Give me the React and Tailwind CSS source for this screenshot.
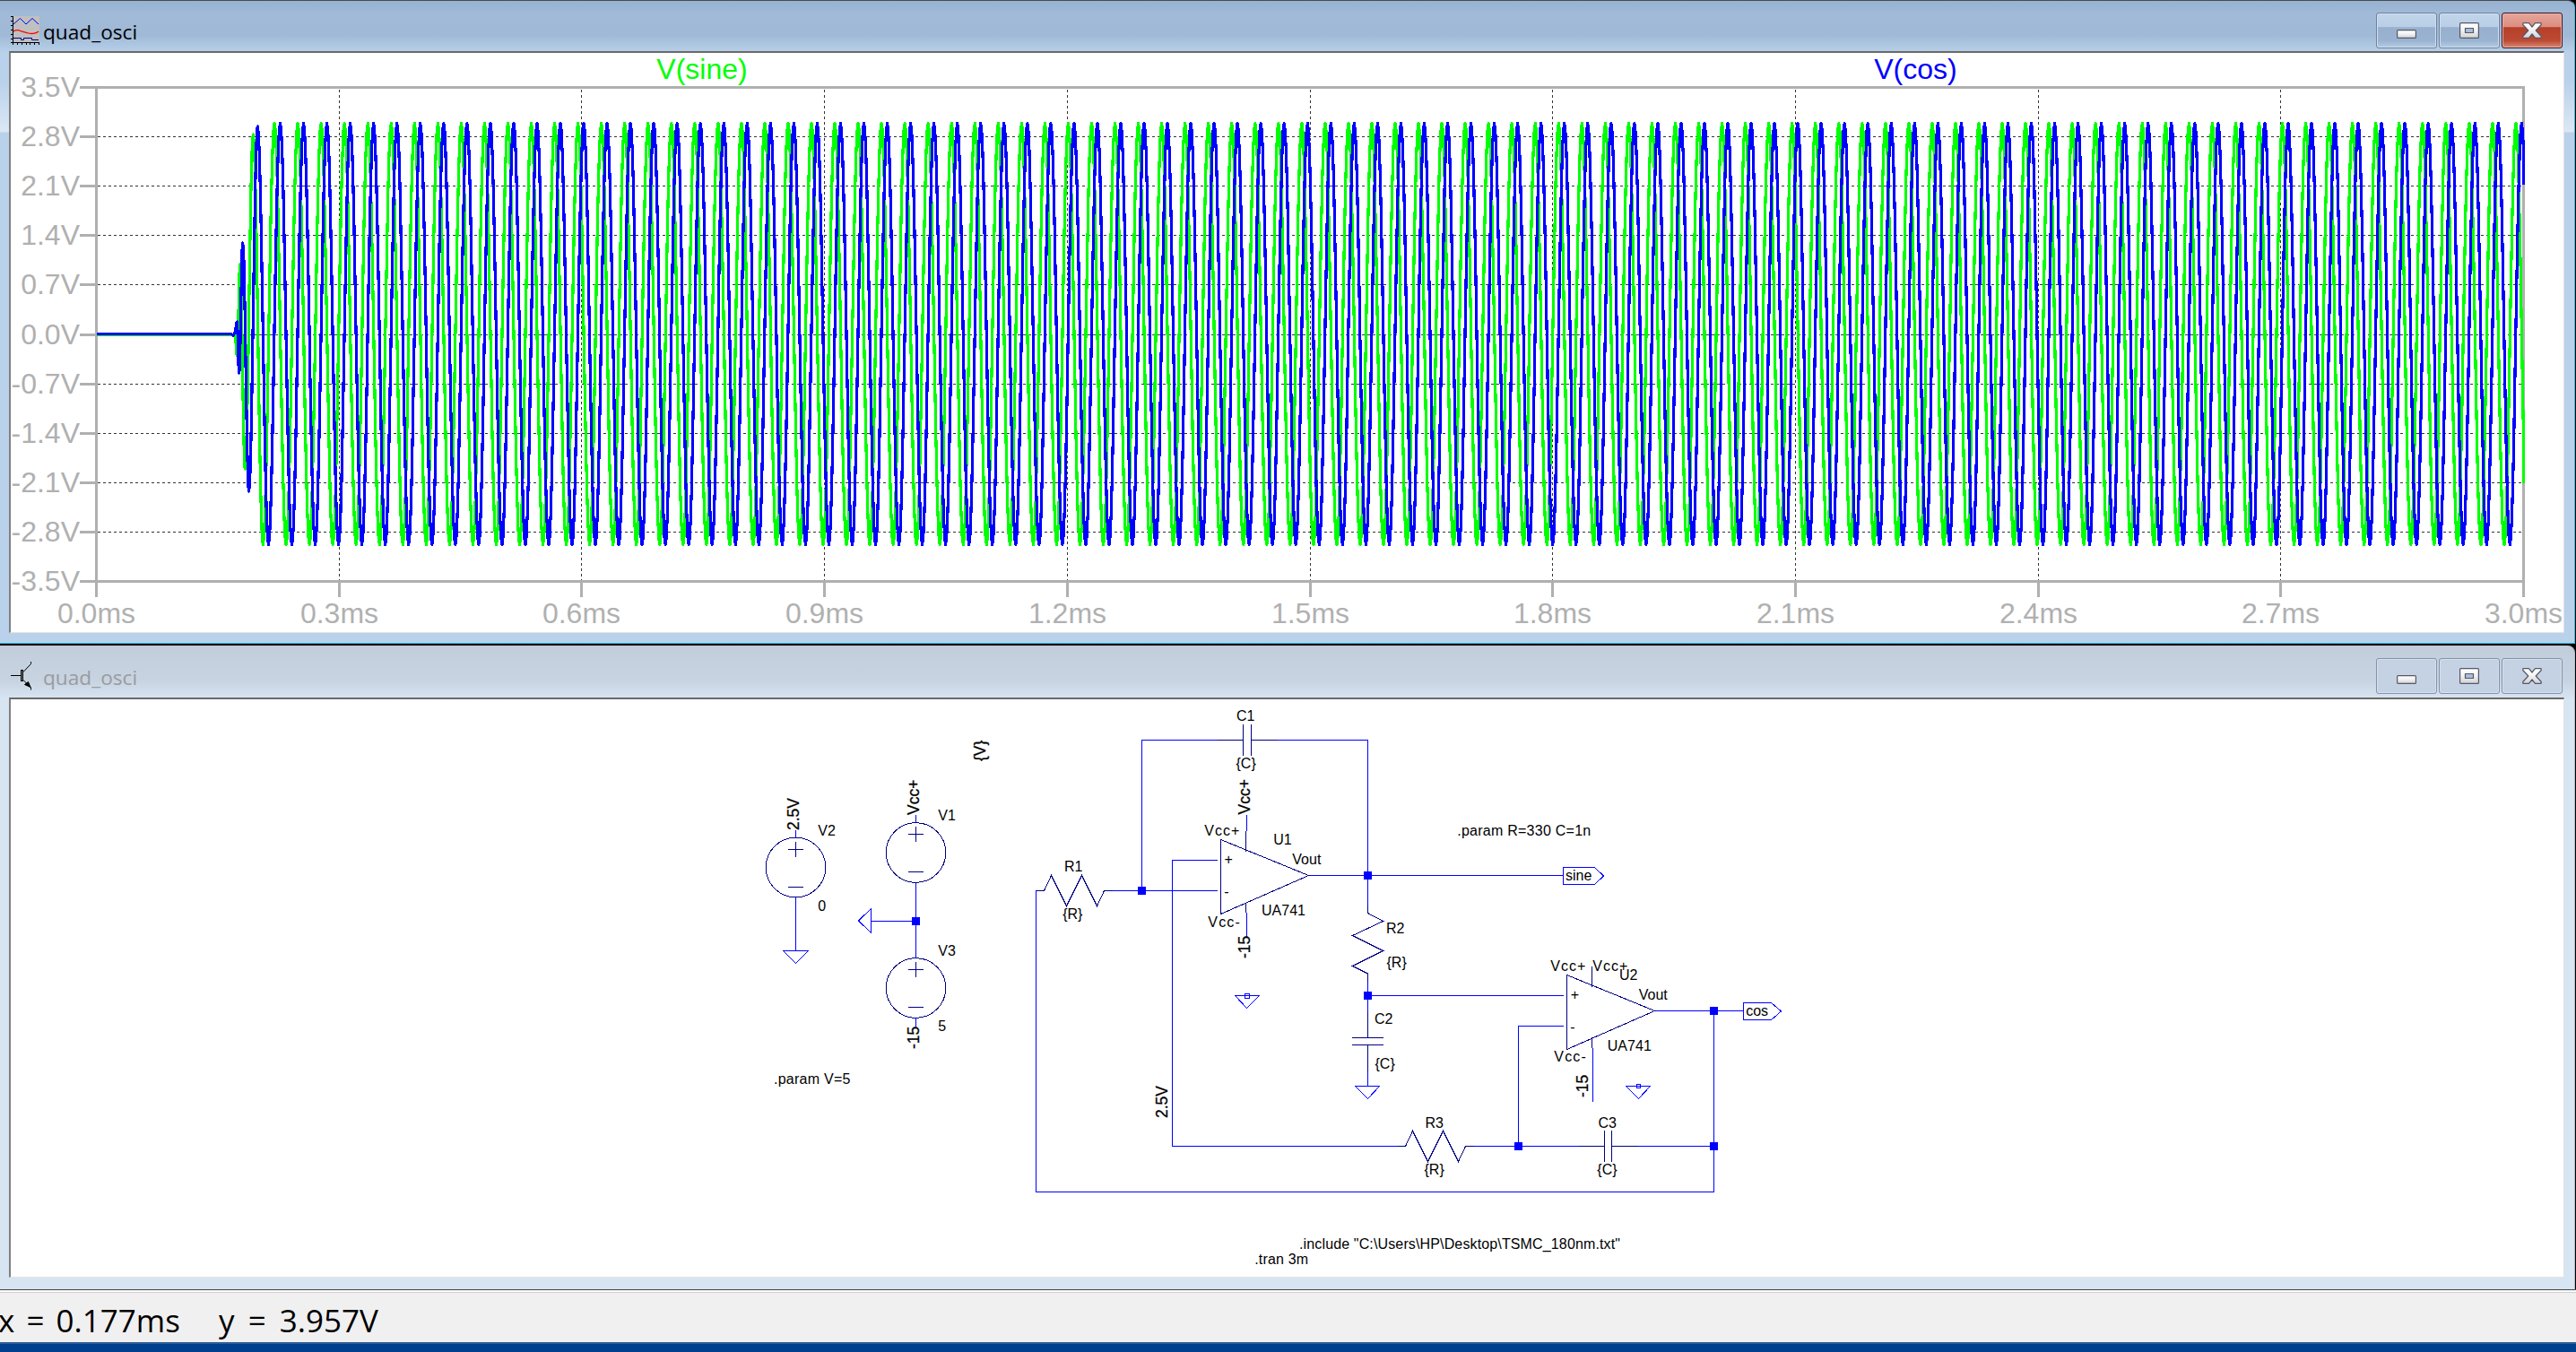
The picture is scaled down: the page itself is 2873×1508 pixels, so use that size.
import React from "react";

const GREY = "#b0b0b0";
const NAVY = "#000080";
const BLUE = "#0000ff";

/* ---------- waveform data ---------- */
const PERIOD = 26.04;
const STARTUP_SINE = [
  [107.5, 373.5], [262, 373.5], [264.5, 397], [267.7, 295], [273.3, 523], [282.3, 150], [293.3, 607.5],
];
const STARTUP_COS = [
  [107.5, 372.5], [258, 372.5], [260, 374], [262, 371], [264.3, 359], [266.7, 416], [270.7, 271],
  [277.6, 548], [287.3, 141], [299.4, 607.5],
];

function trace(startup, firstPeak) {
  const pts = startup.slice();
  for (let k = 0; k < 97; k++) {
    pts.push([firstPeak + k * PERIOD, 137.5]);
    pts.push([firstPeak + k * PERIOD + PERIOD / 2, 607.5]);
  }
  let d = `M${pts[0][0]} ${pts[0][1]}`;
  for (let i = 1; i < pts.length; i++) {
    const [x0, y0] = pts[i - 1];
    const [x1, y1] = pts[i];
    if (Math.abs(y1 - y0) < 4) {
      d += `L${x1} ${y1}`;
      continue;
    }
    for (let s = 1; s <= 12; s++) {
      const t = s / 12;
      const x = x0 + (x1 - x0) * t;
      if (x > 2815.9) return d;
      d += `L${Math.min(x, 2814.5).toFixed(1)} ${(y0 + ((y1 - y0) * (1 - Math.cos(Math.PI * t))) / 2).toFixed(1)}`;
    }
  }
  return d;
}

const Y_TICKS = [
  ["3.5V", 97.5], ["2.8V", 152.5], ["2.1V", 207.5], ["1.4V", 262.5], ["0.7V", 317.5], ["0.0V", 373.5],
  ["-0.7V", 428.5], ["-1.4V", 483.5], ["-2.1V", 538.5], ["-2.8V", 593.5], ["-3.5V", 648.5],
];
const X_TICKS = ["0.0ms", "0.3ms", "0.6ms", "0.9ms", "1.2ms", "1.5ms", "1.8ms", "2.1ms", "2.4ms", "2.7ms", "3.0ms"];

function Plot() {
  const xs = X_TICKS.map((_, i) => Math.round(107 + i * 270.7) + 0.5);
  return (
    <svg viewBox="12 59 2847 646" className="block h-[646px] w-[2847px] font-['Liberation_Sans',Arial,sans-serif]">
      <g stroke="#333" strokeDasharray="3 3" shapeRendering="crispEdges">
        {Y_TICKS.slice(1, -1).map(([l, y]) => <line key={l} x1="109" x2="2813" y1={y} y2={y} />)}
        {xs.slice(1, -1).map((x) => <line key={x} x1={x} x2={x} y1="100" y2="647" />)}
      </g>
      <g stroke={GREY} strokeWidth="3" shapeRendering="crispEdges" fill="none">
        {Y_TICKS.map(([l, y]) => <line key={l} x1="89" x2="108" y1={y} y2={y} />)}
        {xs.map((x) => <line key={x} x1={x} x2={x} y1="648" y2="666" />)}
        <rect x="107.5" y="97.5" width="2707" height="551" />
      </g>
      <g fill={GREY} fontSize="32">
        {Y_TICKS.map(([l, y]) => <text key={l} x="89" y={y + 10.5} textAnchor="end">{l}</text>)}
        {X_TICKS.map((l, i) => <text key={l} x={xs[i]} y="694.5" textAnchor="middle">{l}</text>)}
      </g>
      <g fill="none" strokeWidth="3.200" strokeLinejoin="round" shapeRendering="crispEdges">
        <path d={trace(STARTUP_SINE, 306.1)} stroke="#00ff00" />
        <path d={trace(STARTUP_COS, 312.5)} stroke={BLUE} />
      </g>
      <text x="783" y="88" fontSize="32" fill="#00ff00" textAnchor="middle">V(sine)</text>
      <text x="2136.500" y="88" fontSize="32" fill={BLUE} textAnchor="middle">V(cos)</text>
    </svg>
  );
}

/* ---------- schematic ---------- */
const Source = ({ x, y }) => (
  <g>
    <circle cx={x} cy={y} r="33.3" />
    <path d={`M${x - 8.5} ${y - 20.5}h17M${x} ${y - 29}v17M${x - 8.5} ${y + 21.5}h17`} />
  </g>
);
const Node = ({ x, y }) => <rect x={x - 4.5} y={y - 4.5} width="9" height="9" fill={BLUE} stroke="none" />;

const LABELS = [
  ["V2", 912.3, 932], ["0", 912.3, 1016], ["V1", 1046.3, 915], ["V3", 1046.3, 1066], ["5", 1046.3, 1150],
  [".param V=5", 863, 1209, 85.5], ["C1", 1379, 804], ["{C}", 1378.5, 857], ["Vcc+", 1343.3, 932, 39],
  ["U1", 1420.3, 942], ["Vout", 1441.3, 964], ["UA741", 1407, 1021, 49], ["Vcc-", 1347.3, 1033.5, 35.5],
  ["+", 1365.5, 964], ["-", 1365.3, 999.5], ["R1", 1187, 972], ["{R}", 1185.2, 1025],
  ["R2", 1546, 1041], ["{R}", 1546.5, 1079], ["C2", 1533, 1142], ["{C}", 1533.5, 1192],
  [".param R=330 C=1n", 1625.2, 932, 149], ["sine", 1746, 982], ["Vcc+", 1729.3, 1083, 39],
  ["Vcc+", 1776.3, 1083, 39], ["U2", 1806, 1093], ["Vout", 1827.7, 1115], ["UA741", 1792.8, 1172, 49],
  ["Vcc-", 1733.3, 1184, 35.5], ["+", 1751.7, 1115], ["-", 1751.3, 1150.5], ["cos", 1947.2, 1133],
  ["R3", 1589.5, 1257.5], ["{R}", 1588.5, 1310], ["C3", 1782.5, 1257.5], ["{C}", 1781.3, 1310],
  ['.include "C:\\Users\\HP\\Desktop\\TSMC_180nm.txt"', 1449, 1393, 358], [".tran 3m", 1399.2, 1410, 60],
];
const UPRIGHT = [
  ["{V}", 1099, 849], ["Vcc+", 1024.7, 909], ["2.5V", 891, 926], ["-15", 1025, 1170],
  ["Vcc+", 1394, 908.5], ["-15", 1394, 1069], ["2.5V", 1302, 1247], ["-15", 1771, 1224],
];

function Schematic() {
  return (
    <svg viewBox="12 780 2847 644" className="block h-[644px] w-[2847px] font-['Liberation_Sans',Arial,sans-serif]">
      <g fill="none" stroke={BLUE} shapeRendering="crispEdges">
        <path d="M887.5 926v8M887.5 1001v59.5M873.5 1060.5h28l-14 14z" />
        <path d="M1021.5 909v8M1021.5 984v84.5M971.5 1027.5h50M971.5 1013.5v27l-14 -13.5zM1021.5 1136v9" />
        <path d="M1164 993.5h-8.5v336h756v-202M1231 993.5h126.500M1273.5 993.5v-168h113M1395.5 825.5h130v193" />
        <path d="M1358 959.5h-50.500v319h260M1459.5 976.5h284M1390.5 909v18M1390.5 1018v27" />
        <path d="M1525.5 1085v72M1525.5 1166v45.500M1511.5 1211.5h27l-13 14z" />
        <path d="M1377.5 1110.5h27l-14 14zM1388.5 1108.5h5v5h-5z" />
        <path d="M1525 1110.5h219M1744 1144.5h-50.500v134M1776.5 1169v60M1813.5 1211.5h27l-13 14zM1825.5 1209.5h4v4h-4z" />
        <path d="M1845 1127.5h99M1634 1278.5h155M1798 1278.5h113" />
        <path d="M1743.5 967.5h35l10 9.500l-10 9.500h-35zM1944.5 1118.5h31l11 9.500l-11 9.500h-31z" />
      </g>
      <g fill="none" stroke={NAVY} shapeRendering="crispEdges">
        <Source x={887.5} y={967.5} />
        <Source x={1021.5} y={951} />
        <Source x={1021.5} y={1102} />
        <path d="M1386.5 808v35M1395.5 808v35M1358 825.5h28M1396 825.5h28" />
        <path d="M1361.5 936.5v83l98 -43zM1389.5 927v23M1389.5 1007v11" />
        <path d="M1747.5 1087.5v83l98 -43zM1775.5 1078v23M1775.5 1157v12" />
        <path d="M1156 993.5h8.500l8 -17l17 34l17 -34l17 34l8 -17h9" />
        <path d="M1559 1278.5h8.500l8 -17l17 34l17 -34l17 34l8 -17h9" />
        <path d="M1525.5 1010v8.500l17 9l-34 16l34 17l-34 17l17 8.500v9" />
        <path d="M1508 1157.5h35M1508 1165.5h35M1525.5 1128v29M1525.5 1166v29" />
        <path d="M1789.5 1261v35M1797.5 1261v35M1761 1278.5h28M1798 1278.5h29" />
      </g>
      <Node x={1021.5} y={1027.5} />
      <Node x={1273.5} y={993.5} />
      <Node x={1525.5} y={976.5} />
      <Node x={1525.5} y={1110.5} />
      <Node x={1693.5} y={1278.5} />
      <Node x={1911.5} y={1127.5} />
      <Node x={1911.5} y={1278.5} />
      <g fontSize="16" fill="#000">
        {LABELS.map(([t, x, y, w], i) => <text key={i} x={x} y={y} textLength={w}>{t}</text>)}
      </g>
      <g fontSize="17.5" fill="#000" stroke="#000" strokeWidth="0.3">
        {UPRIGHT.map(([t, x, y], i) => <text key={i} transform={`translate(${x} ${y}) rotate(-90)`}>{t}</text>)}
      </g>
    </svg>
  );
}

/* ---------- window chrome ---------- */
function Glyph({ kind }) {
  const grad = (
    <defs>
      <linearGradient id="metal" x1="0" y1="0" x2="0" y2="1">
        <stop offset="0" stopColor="#fff" />
        <stop offset="0.45" stopColor="#f4f4f4" />
        <stop offset="1" stopColor="#d2d2d2" />
      </linearGradient>
    </defs>
  );
  return (
    <svg viewBox="0 0 22 18" className="h-[18px] w-[22px]">
      {grad}
      <g fill="url(#metal)" stroke="#55586a" strokeWidth="1.2" strokeLinejoin="round">
        {kind === "min" && <rect x="0.600" y="8.600" width="20.800" height="8.800" rx="1" />}
        {kind === "max" && (
          <>
            <rect x="0.600" y="0.600" width="20.800" height="16.800" rx="1" />
            <rect x="6.500" y="6.500" width="9" height="5" fill="#a9bdd6" />
          </>
        )}
        {kind === "close" && (
          <path d="M1 0.700H7.500L11 5L14.500 0.700H21L21.300 2.500L15.200 9L21.300 15.500L21 17.300H14.500L11 13L7.500 17.300H1L0.700 15.500L6.800 9L0.700 2.500Z" />
        )}
      </g>
    </svg>
  );
}

const BTN_BASE = "flex h-10 w-[68px] items-center justify-center rounded-[3px] border";
const BTN = {
  active: "border-[#70829f] bg-linear-[180deg,#c1d5ea_0%,#b9cfe6_40%,#98b0cd_41%,#9ab3d0_80%,#b4cde5_100%] shadow-[inset_0_0_0_1px_#cfdff0]",
  close: "border-[#431422] bg-linear-[180deg,#e5a59b_0%,#dc8d80_40%,#b5402a_41%,#bd4a33_80%,#d98b76_100%] shadow-[inset_0_0_0_1px_#e9b3a9]",
  inactive: "border-[#8492ab] bg-[#c5d2e3] shadow-[inset_0_0_0_1px_#d5e0ed]",
};

function Controls({ active }) {
  return (
    <div className="flex gap-[2px]">
      <div className={`${BTN_BASE} ${active ? BTN.active : BTN.inactive}`}><Glyph kind="min" /></div>
      <div className={`${BTN_BASE} ${active ? BTN.active : BTN.inactive}`}><Glyph kind="max" /></div>
      <div className={`${BTN_BASE} ${active ? BTN.close : BTN.inactive}`}><Glyph kind="close" /></div>
    </div>
  );
}

function WaveIcon() {
  return (
    <svg viewBox="0 0 32 32" className="h-8 w-8" fill="none">
      <rect x="2" width="30" height="30" fill="#c0c0c0" />
      <path d="M3 9L10.500 2.500L17 9L24 2.500L31 9" stroke="#0000ff" />
      <path d="M3 17C6 15 9 15.500 12 17L18 18.500C22 20 28 20 31 17" stroke="#ff0000" strokeWidth="1.300" />
      <path d="M3 24.500H11.500V26.500H14.500V24.500H23.500V26.500H31" stroke="#00008b" />
      <path d="M2.500 0V32M0 .5H2M0 5.500H2M0 10.500H2M0 15.500H2M0 20.500H2M0 25.500H2M0 29.500H32M7.500 30V32M12.500 30V32M17.500 30V32M21.500 30V32M26.500 30V32M31.500 30V32" stroke="#000" />
    </svg>
  );
}

function TransistorIcon() {
  return (
    <svg viewBox="0 0 32 32" className="h-8 w-8" fill="none" stroke="#000">
      <path d="M0 15.500H11M14 11.500L22.500 2.500V0M14 20.500L22.500 29V31.500" />
      <rect x="11.500" y="9.500" width="2" height="12" fill="#808080" />
      <path d="M22 28.500L15.500 25.500L19.500 22.500Z" fill="#000" />
    </svg>
  );
}

function TitleBar({ icon, active }) {
  return (
    <div className="flex h-[58px] items-start justify-between pr-[13px] pl-3">
      <div className="flex items-start gap-[4px] pt-[17px]">
        {icon}
        <span className={`mt-px origin-left scale-x-[1.03] font-['Open_Sans','Noto_Sans',sans-serif] text-[22px] leading-8 ${active ? "text-black" : "text-[#9a9ba0]"}`}>
          quad_osci
        </span>
      </div>
      <div className="pt-[13px]"><Controls active={active} /></div>
    </div>
  );
}

export default function App() {
  return (
    <div className="flex h-[1508px] w-[2873px] flex-col overflow-hidden bg-black">
      <section className="h-[718px] w-[2872px] rounded-tr-lg border-t border-r border-b border-t-[#4a4a4a] border-r-[#38bcd8] border-b-[#38bcd8] bg-linear-[180deg,#96b3d1_0px,#a0bad7_14px,#9fb9d6_38px,#b9d1ea_58px,#b9d1ea_90px,#dbe8f5_146px,#b9d1ea_147px]">
        <TitleBar icon={<WaveIcon />} active />
        <div className="-mt-[2px] ml-[10px] h-[649px] w-[2850px] border-t-2 border-r border-b border-l-2 border-t-[#696969] border-r-[#e3e3e3] border-b-[#e3e3e3] border-l-[#808080] bg-white">
          <Plot />
        </div>
      </section>
      <section className="mt-[2px] h-[718px] w-[2872px] rounded-tr-lg border-t border-r border-t-[#c9c3d4] border-r-[#b4bcc6] bg-linear-[180deg,#c2cddb_0px,#c4d1df_20px,#c7d3e0_38px,#d7e4f2_58px,#d7e4f2_100%]">
        <TitleBar icon={<TransistorIcon />} />
        <div className="-mt-px ml-[10px] h-[647px] w-[2850px] border-t-2 border-r border-b border-l-2 border-t-[#696969] border-r-[#e3e3e3] border-b-[#e3e3e3] border-l-[#808080] bg-white">
          <Schematic />
        </div>
      </section>
      <footer className="flex h-[70px] flex-col border-t border-[#4a4a4a] bg-[#f0f0f0]">
        <div className="mt-px h-[2px] border-b border-[#d0d0d0] bg-white" />
        <div className="flex h-[57px] border-b-2 border-[#2f5d96] font-['Open_Sans','Noto_Sans',sans-serif] text-[35px] leading-[62px] whitespace-nowrap text-black">
          <span className="-ml-0.5 w-[246px] [word-spacing:4px]">x = 0.177ms</span>
          <span className="[word-spacing:6px]">y = 3.957V</span>
        </div>
        <div className="flex-1 bg-[#003f8e]" />
      </footer>
    </div>
  );
}
